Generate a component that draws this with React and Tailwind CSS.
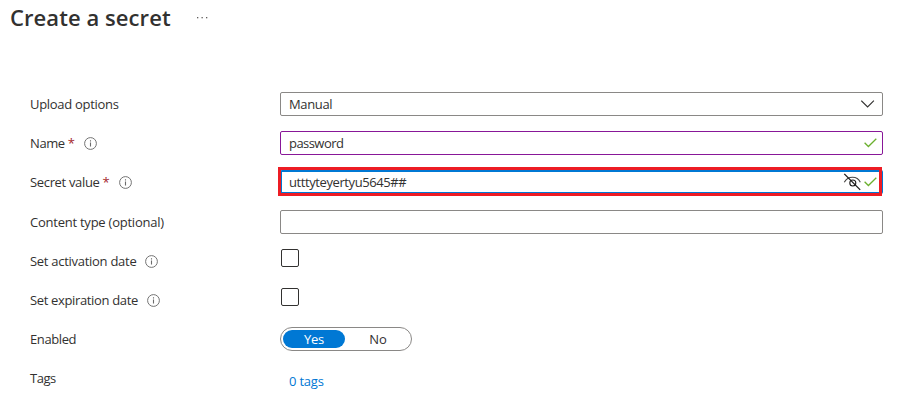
import React from "react";

function Info({ className }) {
  return (
    <svg className={`h-[13px] w-[13px] shrink-0 ${className}`} viewBox="0 0 13 13" fill="none" stroke="#6b6b6b">
      <circle cx="6.5" cy="6.5" r="5.900" strokeWidth="0.950" />
      <path d="M6.5 5.500V9.500M6.5 3.300V4.400" strokeWidth="1.100" />
    </svg>
  );
}

function Check() {
  return (
    <svg className="h-[10px] w-[13px] shrink-0" viewBox="0 0 13 10" fill="none" stroke="#6bb02e" strokeWidth="1.300">
      <path d="M0.600 4.800L4.400 8.500L12.300 0.800" />
    </svg>
  );
}

function HiddenEye() {
  return (
    <svg className="h-[18px] w-[18px] shrink-0" viewBox="0 0 18 18" fill="none" stroke="#1b1a19" strokeWidth="1.100">
      <path d="M1.300 9.200C3 6 5.600 4.200 9.500 4.200s6.400 1.800 7.800 5" stroke="#484644" />
      <circle cx="9.800" cy="10" r="3" />
      <path d="M1.300 0.900L17.200 16.900" strokeWidth="1.300" />
    </svg>
  );
}

function Row({ label, tracking, required, info, tall, children }) {
  return (
    <div className={`flex items-start ${tall ? "h-10" : "h-[39px]"}`}>
      <div className="flex h-6 w-[250px] shrink-0 items-center whitespace-nowrap">
        <span className={tracking}>{label}</span>
        {required && <span className="ml-[3px] text-[#a4262c]">*</span>}
        {info && <Info className={info} />}
      </div>
      {children}
    </div>
  );
}

const field = "flex h-6 w-[603px] shrink-0 items-center rounded-[2px] border pl-2";

export default function App() {
  return (
    <main className="h-[409px] w-[900px] overflow-hidden bg-white font-['Open_Sans','Noto_Sans',sans-serif] text-[13px] leading-6 text-[#323130]">
      <header className="flex h-[92px] items-start pl-[10px] pt-px">
        <h1 className="w-[186px] whitespace-nowrap text-[22px] font-semibold leading-8 tracking-[0.07px]">Create a secret</h1>
        <svg className="mt-[15px] h-[3px] w-[13px]" viewBox="0 0 13 3" fill="#605e5c">
          <rect x="1" y="1" width="1.300" height="1.300" />
          <rect x="5.500" y="1" width="1.300" height="1.300" />
          <rect x="10" y="1" width="1.300" height="1.300" />
        </svg>
      </header>
      <section className="pl-[30px]">
        <Row label="Upload options" tracking="tracking-[-0.3px]">
          <div className={`${field} justify-between border-[#8a8886] pr-[7px]`}>
            <span className="tracking-[-0.35px]">Manual</span>
            <svg className="h-2 w-[14px]" viewBox="0 0 14 8" fill="none" stroke="#323130" strokeWidth="1.100">
              <path d="M0.300 0.700L6.600 7L12.900 0.700" />
            </svg>
          </div>
        </Row>
        <Row label="Name" tracking="tracking-[-0.4px]" required info="ml-[9px]">
          <div className={`${field} justify-between border-[#881798] pr-[5px]`}>
            <span className="tracking-[-0.55px]">password</span>
            <Check />
          </div>
        </Row>
        <Row label="Secret value" tracking="tracking-[-0.34px]" required info="ml-[9px]" tall>
          <div className="relative flex h-6 w-[603px] shrink-0 items-center rounded-[2px] border-2 border-[#0078d4] pl-[7px] pr-[4px]">
            <span className="grow tracking-[-0.41px]">utttyteyertyu5645##</span>
            <HiddenEye />
            <span className="ml-[3px] flex"><Check /></span>
            <div className="absolute -left-1 -top-[5px] h-[29px] w-[604px] border-[3px] border-[#ed1c24]" />
          </div>
        </Row>
        <Row label="Content type (optional)" tracking="tracking-[-0.24px]">
          <div className={`${field} border-[#8a8886]`} />
        </Row>
        <Row label="Set activation date" tracking="tracking-[-0.28px]" info="ml-[9px]">
          <div className="ml-px h-[18px] w-[18px] rounded-[2px] border border-[#323130]" />
        </Row>
        <Row label="Set expiration date" tracking="tracking-[-0.35px]" info="ml-[9px]">
          <div className="ml-px h-[18px] w-[18px] rounded-[2px] border border-[#323130]" />
        </Row>
        <Row label="Enabled" tracking="tracking-[-0.4px]">
          <div className="flex h-6 w-[132px] items-center rounded-full border border-[#8a8886] pl-[2px] leading-[18px]">
            <span className="h-[18px] w-[62px] rounded-full bg-[#0078d4] text-center tracking-[-0.3px] text-white">Yes</span>
            <span className="w-[66px] text-center">No</span>
          </div>
        </Row>
        <Row label="Tags" tracking="tracking-[-0.5px]">
          <a className="ml-[9px] mt-[3px] tracking-[-0.2px] text-[#0078d4]">0 tags</a>
        </Row>
      </section>
    </main>
  );
}
